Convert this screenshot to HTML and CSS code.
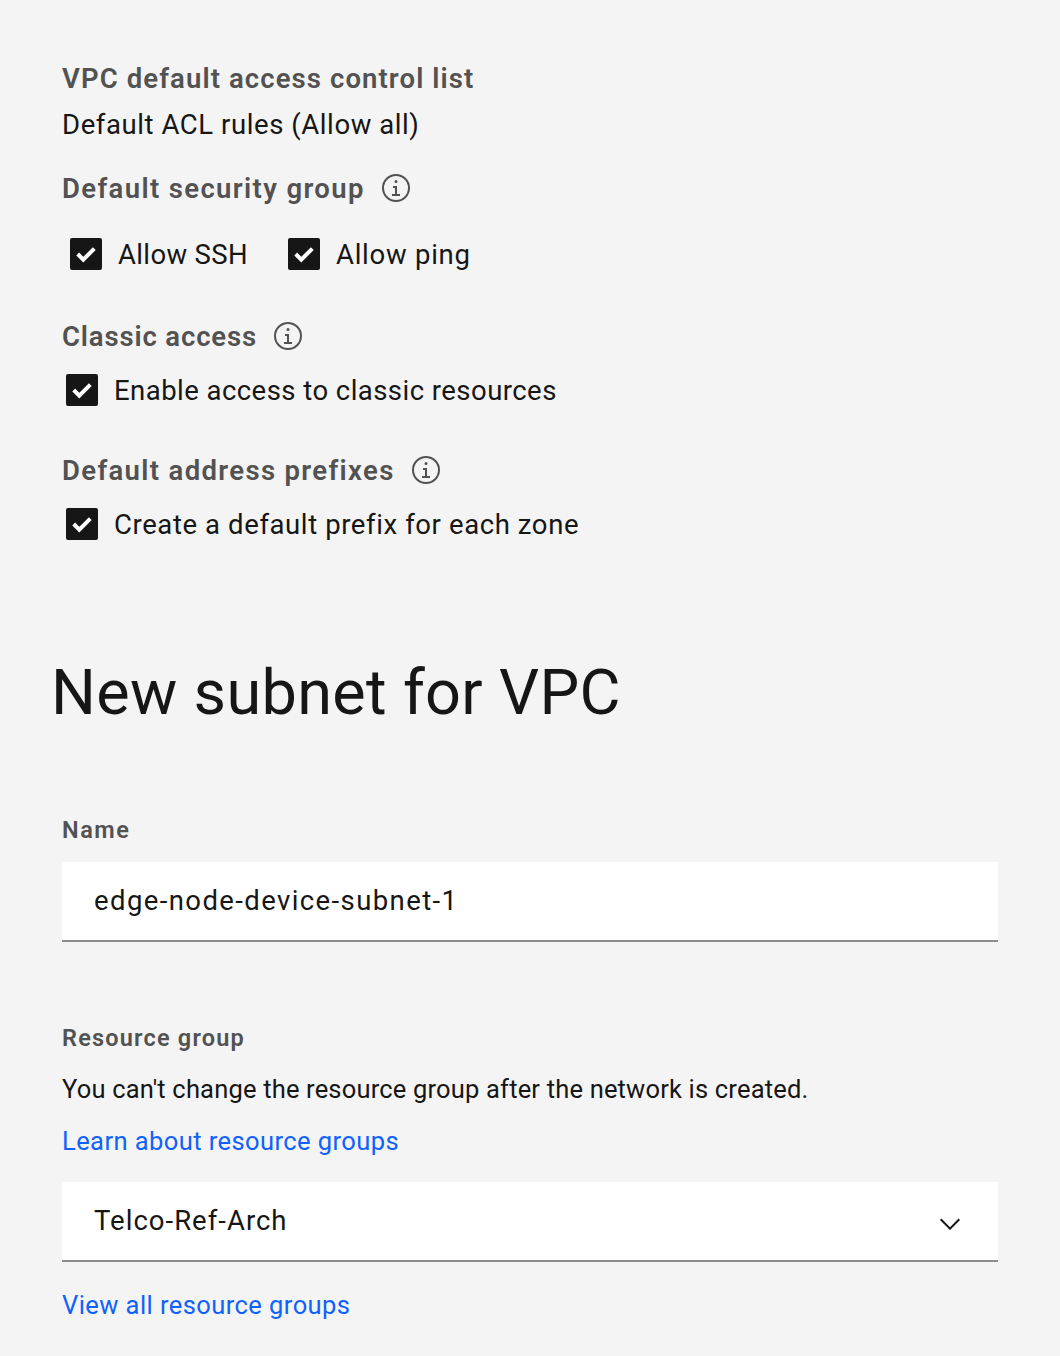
FILE: index.html
```html
<!DOCTYPE html>
<html lang="en">
<head>
<meta charset="utf-8">
<title>New subnet for VPC</title>
<link rel="stylesheet" href="styles.css">
</head>
<body>
<svg class="sprite" aria-hidden="true">
  <symbol id="info" viewBox="0 0 32 32"><path d="M17 22v-8h-4v2h2v6h-3v2h8v-2zM16 8a1.5 1.5 0 1 0 1.5 1.5A1.5 1.5 0 0 0 16 8z"/><path d="M16 30a14 14 0 1 1 14-14 14 14 0 0 1-14 14zm0-26a12 12 0 1 0 12 12A12 12 0 0 0 16 4z"/></symbol>
  <symbol id="check" viewBox="0 0 32 32"><path d="M7.700 16l5.600 5.600L24.300 10.600" fill="none" stroke="#fff" stroke-width="4"/></symbol>
</svg>
<main class="form">
  <h2 class="heading"><span class="t-acl">VPC default access control list</span></h2>
  <p class="value"><span class="t-rules">Default ACL rules (Allow all)</span></p>
  <h2 class="heading heading-security"><span class="t-security">Default security group</span><svg class="info"><use href="#info"/></svg></h2>
  <div class="checks checks-security">
    <label class="check"><span class="box"><svg><use href="#check"/></svg></span><span class="t-ssh">Allow SSH</span></label>
    <label class="check"><span class="box"><svg><use href="#check"/></svg></span><span class="t-ping">Allow ping</span></label>
  </div>
  <h2 class="heading heading-classic"><span class="t-classic">Classic access</span><svg class="info"><use href="#info"/></svg></h2>
  <div class="checks">
    <label class="check"><span class="box"><svg><use href="#check"/></svg></span><span class="t-enable">Enable access to classic resources</span></label>
  </div>
  <h2 class="heading heading-prefix"><span class="t-prefixes">Default address prefixes</span><svg class="info"><use href="#info"/></svg></h2>
  <div class="checks">
    <label class="check"><span class="box"><svg><use href="#check"/></svg></span><span class="t-create">Create a default prefix for each zone</span></label>
  </div>
  <h1 class="title"><span class="t-title">New subnet for VPC</span></h1>
  <p class="label"><span class="t-name">Name</span></p>
  <div class="field"><span class="t-edge">edge-node-device-subnet-1</span></div>
  <p class="label label-group"><span class="t-group">Resource group</span></p>
  <p class="text"><span class="t-help">You can't change the resource group after the network is created.</span></p>
  <p class="text"><a class="link t-learn">Learn about resource groups</a></p>
  <div class="field field-select"><span class="t-telco">Telco-Ref-Arch</span><svg class="chevron" viewBox="0 0 16 16"><path d="M8 11L3 6l.7-.7L8 9.600l4.300-4.300.7.7z"/></svg></div>
  <p class="text text-view"><a class="link t-view">View all resource groups</a></p>
</main>
</body>
</html>
```
FILE: styles.css
```css
* { box-sizing: border-box; margin: 0; padding: 0; }
body { background: #f4f4f4; color: #161616; font-family: Roboto, "Liberation Sans", sans-serif; font-size: 27.5px; line-height: 36px; }
.sprite { display: none; }
.form { padding: 60px 62px 0; height: 1356px; overflow: hidden; }
.heading { display: flex; align-items: center; height: 36px; font-size: 27.5px; font-weight: 600; color: #525252; }
.heading span, .check > span:last-child { padding-top: 2px; }
.value { margin-top: 11px; margin-bottom: -1px; }
.heading-security { margin-top: 28px; }
.info { width: 32px; height: 32px; margin-left: 15px; fill: #525252; }
.checks { display: flex; gap: 40px; height: 36px; margin-top: 18px; padding-left: 4px; }
.checks-security { margin-top: 30px; padding-left: 8px; }
.check { display: flex; align-items: center; gap: 16px; }
.box { width: 32px; height: 32px; border-radius: 2px; background: #161616; }
.box svg { display: block; width: 32px; height: 32px; }
.heading-classic { margin-top: 46px; }
.heading-prefix { margin-top: 44px; }
.title { margin: 111px 0 0 -11px; font-size: 63px; font-weight: 400; line-height: 80px; }
.label { margin-top: 81px; font-size: 23.5px; font-weight: 600; line-height: 32px; color: #525252; }
.field { display: flex; align-items: center; justify-content: space-between; height: 80px; margin-top: 16px; padding: 0 32px; background: #fff; border-bottom: 2px solid #8d8d8d; }
.label-group { margin-top: 80px; }
.text { margin-top: 16px; font-size: 25.5px; }
.label-group + .text { margin-top: 17px; }
.field-select { margin-top: 23px; }
.chevron { width: 32px; height: 32px; margin-top: 5px; fill: #161616; }
.text-view { margin-top: 25px; }
.link { color: #0f62fe; }

/* Tracking for each piece of text */
.t-acl { letter-spacing: 1.1px; }
.t-rules { letter-spacing: 0.58px; }
.t-security { letter-spacing: 1.365px; }
.t-ssh { letter-spacing: 0.356px; }
.t-ping { letter-spacing: 0.75px; }
.t-classic { letter-spacing: 0.857px; }
.t-enable { letter-spacing: 0.455px; }
.t-prefixes { letter-spacing: 1.34px; }
.t-create { letter-spacing: 0.6px; }
.t-title { letter-spacing: 0.32px; }
.t-name { letter-spacing: 1.5px; }
.t-edge { letter-spacing: 1.4px; }
.t-group { letter-spacing: 1.2px; }
.t-help { letter-spacing: 0.18px; }
.t-learn { letter-spacing: 0.42px; }
.t-telco { letter-spacing: 1.02px; }
.t-view { letter-spacing: 0.43px; }
```
